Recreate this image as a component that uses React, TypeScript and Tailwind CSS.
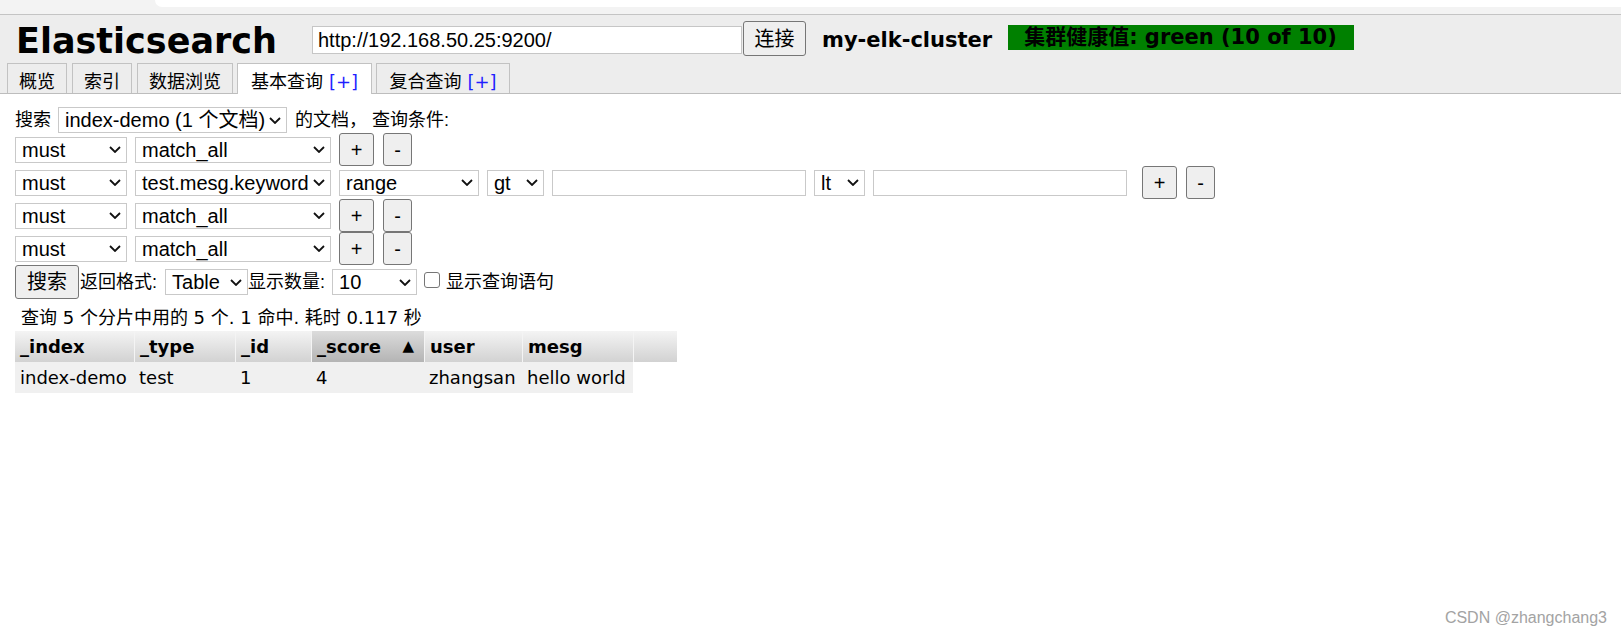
import React from 'react';

const VERDANA = "font-['DejaVu_Sans','Noto_Sans_CJK_SC',sans-serif]";
const ARIAL = "font-['Liberation_Sans','Noto_Sans_CJK_SC',sans-serif]";

function Chevron() {
  return (
    <svg width="12" height="7" viewBox="0 0 12 7" className="shrink-0">
      <path d="M1 1l5 5 5-5" fill="none" stroke="#111" strokeWidth="1.8" />
    </svg>
  );
}

function Select({ value, width, className = '' }: { value: string; width: string; className?: string }) {
  return (
    <div
      className={`${width} ${className} h-[26px] shrink-0 flex items-center justify-between gap-1 border border-[#c9c9c9] bg-white pl-[6px] pr-[5px] text-[20px] leading-none text-black whitespace-nowrap overflow-hidden ${ARIAL}`}
    >
      <span>{value}</span>
      <Chevron />
    </div>
  );
}

function Btn({ label, width, className = '' }: { label: string; width: string; className?: string }) {
  return (
    <div
      className={`${width} ${className} h-[33px] shrink-0 flex items-center justify-center border border-[#767676] rounded-[3px] bg-[#efefef] text-[20px] leading-none text-black ${ARIAL}`}
    >
      {label}
    </div>
  );
}

function TextBox({ className = '' }: { className?: string }) {
  return <div className={`${className} w-[254px] h-[26px] shrink-0 border border-[#c9c9c9] bg-white`} />;
}

const TABS = [
  { label: '概览', w: 'w-[60px] ml-[7px]' },
  { label: '索引', w: 'w-[60px] ml-[5px]' },
  { label: '数据浏览', w: 'w-[96px] ml-[5px]' },
  { label: '基本查询', w: 'w-[135px] ml-[4px]', plus: true, active: true },
  { label: '复合查询', w: 'w-[134px] ml-[4px]', plus: true },
];

const COLS = [
  { name: '_index', w: 'w-[119px]', val: 'index-demo' },
  { name: '_type', w: 'w-[101px]', val: 'test' },
  { name: '_id', w: 'w-[76px]', val: '1' },
  { name: '_score', w: 'w-[113px]', val: '4', sorted: true },
  { name: 'user', w: 'w-[98px]', val: 'zhangsan' },
  { name: 'mesg', w: 'w-[111px]', val: 'hello world' },
];

export default function App() {
  return (
    <div className="relative h-[634px] w-full overflow-hidden bg-white text-black">
      {/* browser strip */}
      <div className="h-[14px] bg-[#f3f3f3] flex">
        <div className="ml-[155px] flex-1 h-[7px] bg-white rounded-bl-[8px]" />
      </div>
      <div className="h-[1px] bg-[#c4c4c4]" />

      {/* header */}
      <div className="bg-[#ededed] border-b border-[#bdbdbd]">
        <div className="flex items-start h-[48px]">
          <div className={`w-[312px] pl-[16px] mt-[6px] text-[35px] leading-[40px] font-bold ${VERDANA}`}>
            Elasticsearch
          </div>
          <div className={`w-[430px] h-[28px] mt-[11px] border border-[#c6c6c6] bg-white pl-[5px] flex items-center text-[20px] ${ARIAL}`}>
            http://192.168.50.25:9200/
          </div>
          <div className={`w-[63px] h-[35px] mt-[6px] ml-[1px] flex items-center justify-center border border-[#767676] rounded-[3px] bg-[#efefef] text-[20px] ${ARIAL}`}>
            连接
          </div>
          <div className={`ml-[16px] mt-[13px] text-[21px] leading-[25px] font-bold ${VERDANA}`}>my-elk-cluster</div>
          <div className={`ml-[16px] mt-[10px] w-[346px] h-[25px] bg-[#008000] pl-[16px] text-[21px] leading-[25px] font-bold whitespace-nowrap ${VERDANA}`}>
            集群健康值: green (10 of 10)
          </div>
        </div>
        <div className="flex h-[30px] items-end">
          {TABS.map((t) => (
            <div
              key={t.label}
              className={`${t.w} ${t.active ? 'bg-white h-[31px] -mb-[1px]' : 'bg-[#ededed] h-[30px]'} border border-b-0 border-[#c2c2c2] pt-[6px] text-center text-[18px] leading-[24px] whitespace-nowrap ${ARIAL}`}
            >
              {t.label}
              {t.plus && <span className={`ml-[6px] text-[#1f1fff] ${VERDANA}`}>[+]</span>}
            </div>
          ))}
        </div>
      </div>

      {/* query form */}
      <div className={`pl-[15px] pt-[13px] text-[18px] ${ARIAL}`}>
        <div className="flex items-center h-[26px]">
          <span className="mr-[7px]">搜索</span>
          <Select value="index-demo (1 个文档)" width="w-[229px]" />
          <span className="ml-[8px]">的文档， 查询条件:</span>
        </div>

        <div className="flex items-center h-[33px]">
          <Select value="must" width="w-[112px]" />
          <Select value="match_all" width="w-[196px]" className="ml-[8px]" />
          <Btn label="+" width="w-[35px]" className="ml-[8px]" />
          <Btn label="-" width="w-[29px]" className="ml-[9px]" />
        </div>

        <div className="flex items-center h-[33px]">
          <Select value="must" width="w-[112px]" />
          <Select value="test.mesg.keyword" width="w-[196px]" className="ml-[8px]" />
          <Select value="range" width="w-[140px]" className="ml-[8px]" />
          <Select value="gt" width="w-[57px]" className="ml-[8px]" />
          <TextBox className="ml-[8px]" />
          <Select value="lt" width="w-[51px]" className="ml-[8px]" />
          <TextBox className="ml-[8px]" />
          <Btn label="+" width="w-[35px]" className="ml-[15px]" />
          <Btn label="-" width="w-[29px]" className="ml-[9px]" />
        </div>

        <div className="flex items-center h-[33px]">
          <Select value="must" width="w-[112px]" />
          <Select value="match_all" width="w-[196px]" className="ml-[8px]" />
          <Btn label="+" width="w-[35px]" className="ml-[8px]" />
          <Btn label="-" width="w-[29px]" className="ml-[9px]" />
        </div>

        <div className="flex items-center h-[33px]">
          <Select value="must" width="w-[112px]" />
          <Select value="match_all" width="w-[196px]" className="ml-[8px]" />
          <Btn label="+" width="w-[35px]" className="ml-[8px]" />
          <Btn label="-" width="w-[29px]" className="ml-[9px]" />
        </div>

        <div className="flex items-center h-[34px]">
          <div className="w-[64px] h-[34px] flex items-center justify-center border border-[#767676] rounded-[3px] bg-[#efefef] text-[20px]">
            搜索
          </div>
          <span className="ml-[1px]">返回格式:</span>
          <Select value="Table" width="w-[83px]" className="ml-[8px]" />
          <span>显示数量:</span>
          <Select value="10" width="w-[85px]" className="ml-[7px]" />
          <div className="ml-[7px] mb-[5px] w-[16px] h-[16px] border border-[#767676] rounded-[3px] bg-white" />
          <span className="ml-[6px]">显示查询语句</span>
        </div>

        <div className={`h-[32px] pt-[4px] leading-[30px] pl-[6px] text-[18px] ${VERDANA}`}>
          查询 5 个分片中用的 5 个. 1 命中. 耗时 0.117 秒
        </div>

        {/* results table */}
        <div className={`text-[18px] ${VERDANA}`}>
          <div className="flex h-[31px]">
            {COLS.map((c, i) => (
              <div
                key={c.name}
                className={`${c.w} ${i > 0 ? 'border-l border-[#f4f4f4]' : ''} ${c.sorted ? 'bg-linear-to-b from-[#dcdcdc] to-[#b4b4b4] pr-[10px]' : 'bg-linear-to-b from-[#f4f4f4] to-[#d2d2d2]'} flex items-center justify-between pl-[5px] font-bold`}
              >
                <span>{c.name}</span>
                {c.sorted && <span className="text-[15px]">▲</span>}
              </div>
            ))}
            <div className="w-[44px] border-l border-[#f4f4f4] bg-linear-to-b from-[#f4f4f4] to-[#d2d2d2]" />
          </div>
          <div className="flex h-[31px] w-[618px] bg-[#f0f0f0]">
            {COLS.map((c) => (
              <div key={c.name} className={`${c.w} flex items-center pl-[5px] whitespace-nowrap`}>
                {c.val}
              </div>
            ))}
          </div>
        </div>
      </div>

      {/* watermark */}
      <div className={`absolute right-[14px] top-[606px] text-[16px] text-[#a3a3a3] ${ARIAL}`}>CSDN @zhangchang3</div>
    </div>
  );
}
